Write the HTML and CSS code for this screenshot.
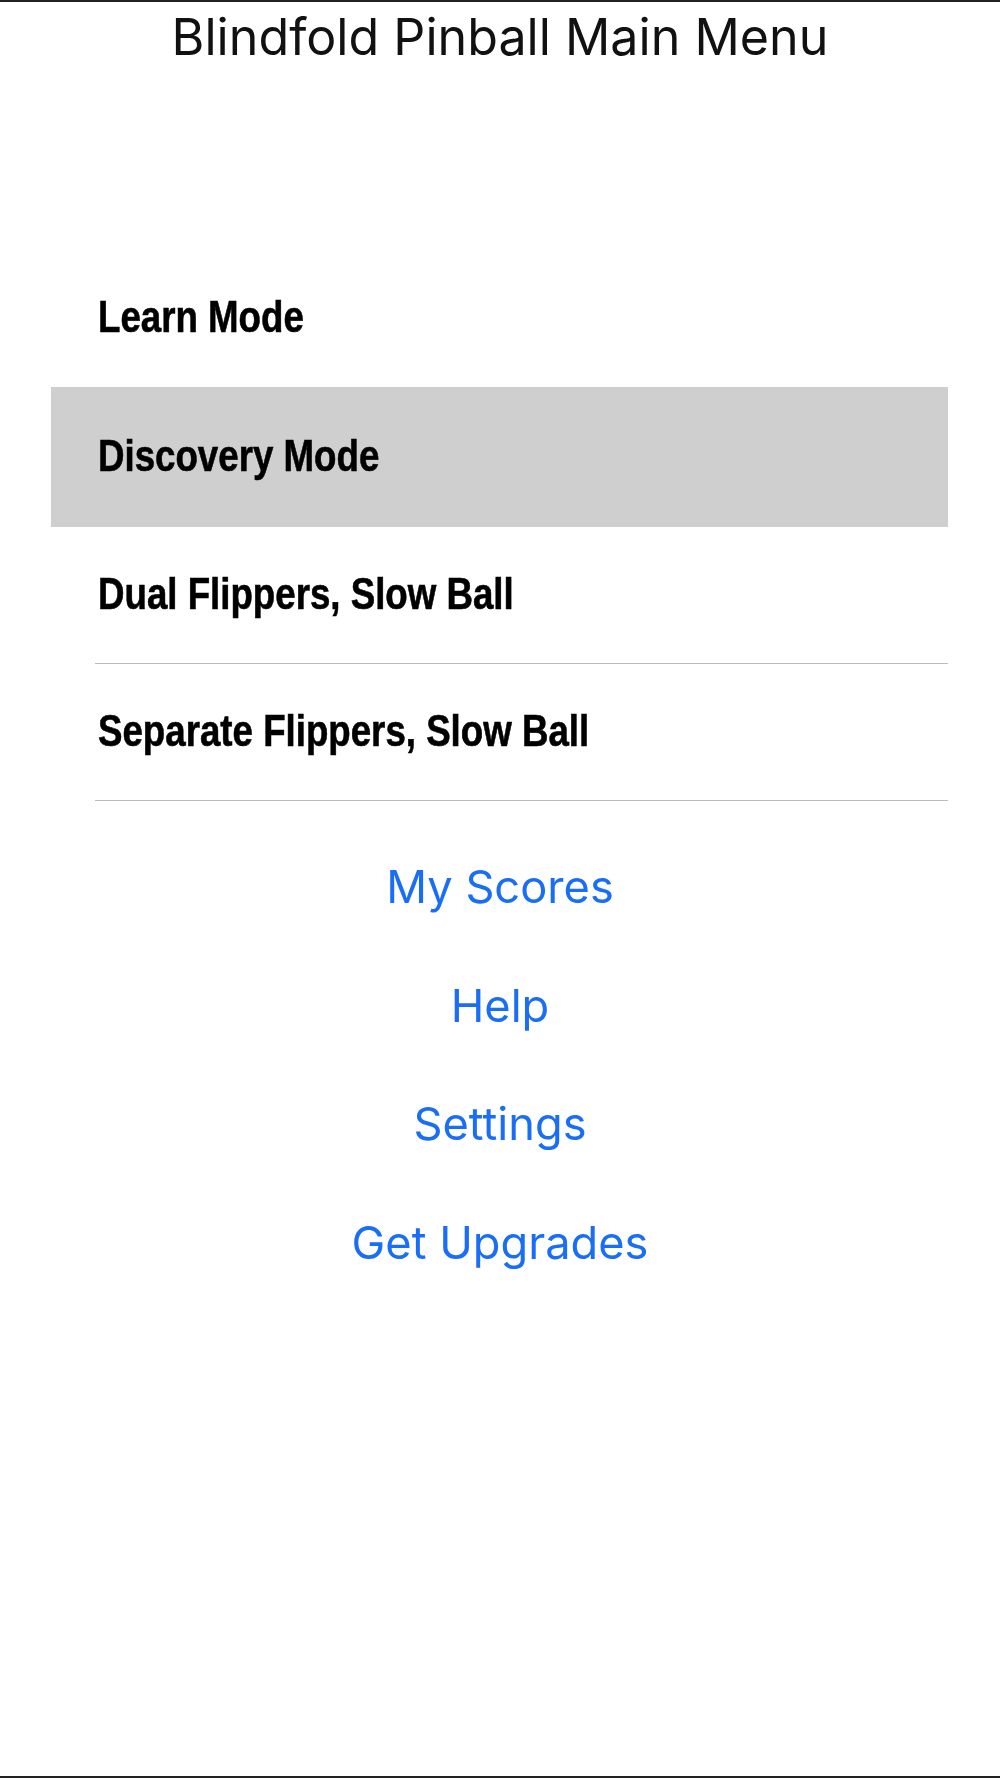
FILE: index.html
```html
<!DOCTYPE html>
<html>
	<head>
		<meta charset="utf-8">
		<title>Blindfold Pinball Main Menu</title>
		<meta name="viewport" content="width=device-width, initial-scale=1">
		<link rel="stylesheet" href="styles.css">
	</head>
	<body>
		<div class="screen">
			<h1 class="title">Blindfold Pinball Main Menu</h1>
			<ul class="modes">
				<li class="mode"><span class="modeText">Learn Mode</span></li>
				<li class="mode selected"><span class="modeText">Discovery Mode</span></li>
				<li class="mode"><span class="modeText">Dual Flippers, Slow Ball</span></li>
				<li class="mode"><span class="modeText">Separate Flippers, Slow Ball</span></li>
			</ul>
			<div class="links">
				<a class="link">My Scores</a>
				<a class="link">Help</a>
				<a class="link">Settings</a>
				<a class="link">Get Upgrades</a>
			</div>
		</div>
	</body>
</html>
```

FILE: styles.css
```css
html, body {
	margin: 0;
	padding: 0;
	background: #fff;
}
.screen {
	box-sizing: border-box;
	height: 1778px;
	border-top: 2px solid #222;
	border-bottom: 2px solid #222;
	font-family: Inter, "Liberation Sans", sans-serif;
	overflow: hidden;
}
.title {
	margin: 0;
	height: 248px;
	padding-top: 7px;
	box-sizing: border-box;
	text-align: center;
	font-size: 50.2px;
	line-height: 56px;
	font-weight: normal;
	color: #111;
	filter: blur(0.4px);
}
.modes {
	list-style: none;
	margin: 0 52px 0 51px;
	padding: 0;
}
.mode {
	display: flex;
	align-items: center;
	height: 137px;
	padding-left: 47px;
	font-family: "Liberation Sans", sans-serif;
	font-weight: bold;
	font-size: 45px;
	color: #000;
}
/* no narrow face installed, so squeeze the bold one */
.modeText {
	display: inline-block;
	margin-top: -3px;
	white-space: nowrap;
	transform: scaleX(0.815);
	transform-origin: left center;
	-webkit-text-stroke: 0.6px #000;
	filter: blur(0.4px);
}
.mode:nth-child(n+3) {
	position: relative;
}
.mode:nth-child(n+3)::after {
	content: "";
	position: absolute;
	left: 44px;
	right: 0;
	bottom: 0;
	height: 1px;
	background: #bbbbc2;
}
.selected {
	height: 140px;
	background: #cfcfcf;
}
.links {
	display: flex;
	flex-direction: column;
	align-items: center;
	padding-top: 27px;
	filter: blur(0.4px);
}
.link {
	height: 118.5px;
	line-height: 118.5px;
	font-size: 45.2px;
	color: #1a6ef5;
}
```
